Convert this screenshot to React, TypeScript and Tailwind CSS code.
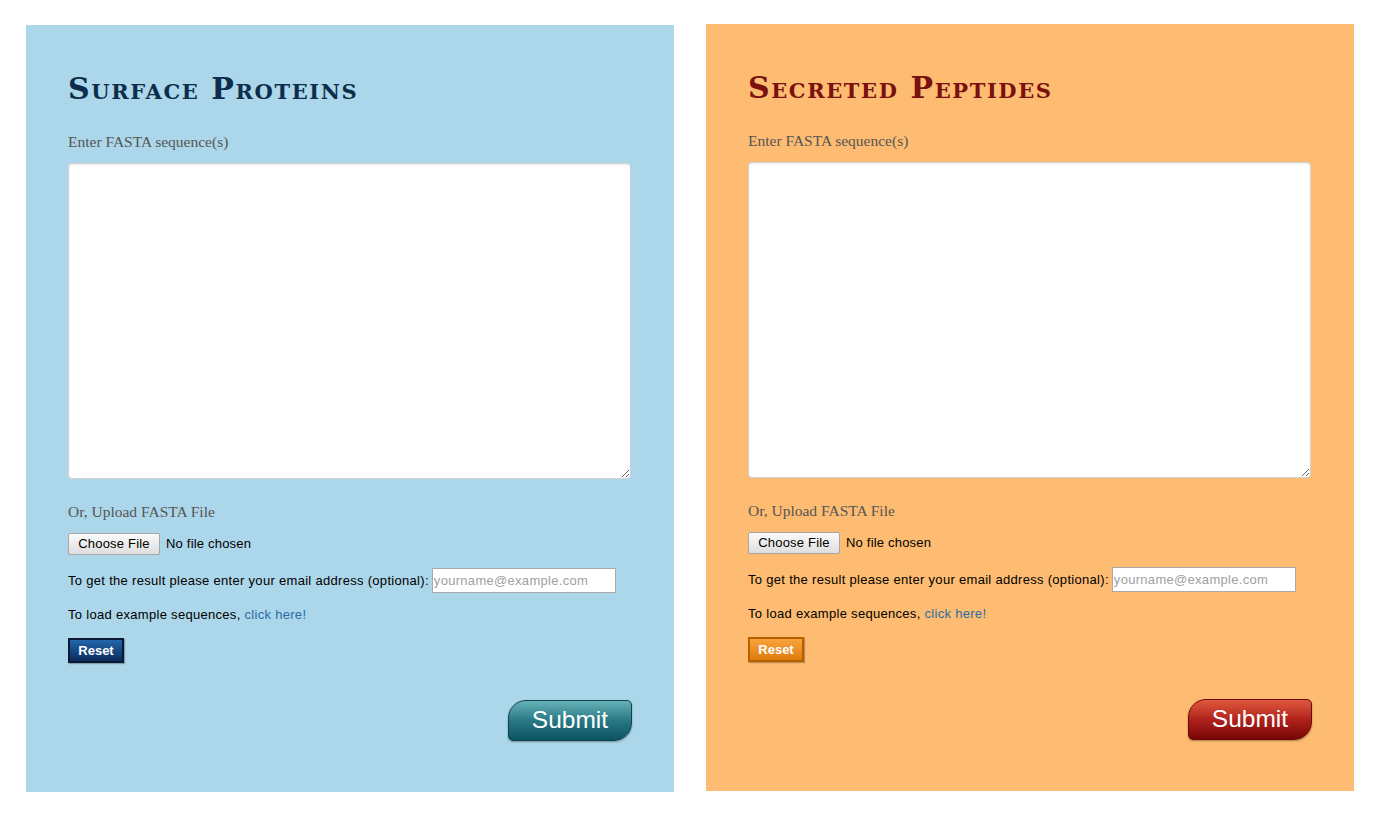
import React from 'react';

type Theme = {
  title: string;
  bg: string;
  titleColor: string;
  reset: string;
  submit: string;
  offset: string;
};

const themes: Theme[] = [
  {
    title: 'Surface Proteins',
    bg: 'bg-[#acd6e9]',
    titleColor: 'text-[#0c2d4c]',
    reset: 'bg-gradient-to-b from-[#2466ad] to-[#0a2c5c] border-[#0b1a30] text-white',
    submit: 'bg-gradient-to-b from-[#66b2b9] via-[#287985] to-[#0b5361] border-[#0d4450]',
    offset: 'mt-[25px]',
  },
  {
    title: 'Secreted Peptides',
    bg: 'bg-[#fdbc71]',
    titleColor: 'text-[#7a1010]',
    reset: 'bg-gradient-to-b from-[#f7a43a] to-[#e07b06] border-[#b55f00] text-white',
    submit: 'bg-gradient-to-b from-[#e0583e] via-[#b0221c] to-[#780606] border-[#6e0808]',
    offset: 'mt-[24px]',
  },
];

const sans = "font-['Liberation_Sans',sans-serif]";

const Panel: React.FC<{ t: Theme }> = ({ t }) => {
  return (
    <section className={`${t.bg} ${t.offset} w-[648px] h-[767px] px-[42px] pt-[44px]`}>
      <h2
        className={`${t.titleColor} text-[30px] leading-[40px] font-bold tracking-[1.6px] [font-variant:small-caps] font-['DejaVu_Serif',serif]`}
      >
        {t.title}
      </h2>
      <p className="mt-[24px] text-[15.5px] leading-[18px] text-[#555] font-['Liberation_Serif',serif]">
        Enter FASTA sequence(s)
      </p>
      <textarea
        className="mt-[12px] block w-[563px] h-[316px] bg-white border border-[#d2d2d2] rounded-[4px] shadow-[inset_0_1px_2px_rgba(0,0,0,0.08)] resize-y outline-none"
        defaultValue=""
      />
      <p className="mt-[24px] text-[15.5px] leading-[18px] text-[#555] font-['Liberation_Serif',serif]">
        Or, Upload FASTA File
      </p>
      <div className={`mt-[12px] flex items-center gap-[6px] text-[13px] tracking-[0.2px] text-black ${sans}`}>
        <span className="inline-flex items-center justify-center w-[92px] h-[22px] rounded-[2px] border border-[#a6a6a6] bg-gradient-to-b from-[#fafafa] to-[#dedede]">
          Choose File
        </span>
        <span>No file chosen</span>
      </div>
      <div className={`mt-[13px] flex items-center gap-[3px] text-[13px] tracking-[0.3px] text-black ${sans}`}>
        <span>To get the result please enter your email address (optional):</span>
        <input
          type="text"
          placeholder="yourname@example.com"
          className="w-[184px] h-[25px] px-[1px] bg-white border border-[#a9a9a9] text-[13px] tracking-[0.3px] placeholder:text-[#a0a0a0] outline-none"
        />
      </div>
      <p className={`mt-[13px] text-[13px] tracking-[0.3px] leading-[18px] text-black ${sans}`}>
        To load example sequences, <a className="text-[#2b6ca6] cursor-pointer">click here!</a>
      </p>
      <button
        className={`${t.reset} mt-[14px] block w-[56px] h-[25px] border-2 text-[13px] font-bold ${sans} shadow-[1px_1px_1px_rgba(0,0,0,0.25)]`}
      >
        Reset
      </button>
      <div className="mt-[37px] flex justify-end">
        <button
          className={`${t.submit} w-[124px] h-[41px] border rounded-tl-[18px] rounded-br-[18px] rounded-tr-[5px] rounded-bl-[5px] text-white text-[24.5px] leading-none ${sans} shadow-[0_1px_2px_rgba(0,0,0,0.35)]`}
        >
          Submit
        </button>
      </div>
    </section>
  );
};

export default function App() {
  return (
    <div className="w-[1374px] h-[814px] bg-white flex items-start gap-[32px] pl-[26px]">
      {themes.map((t) => (
        <Panel key={t.title} t={t} />
      ))}
    </div>
  );
}
